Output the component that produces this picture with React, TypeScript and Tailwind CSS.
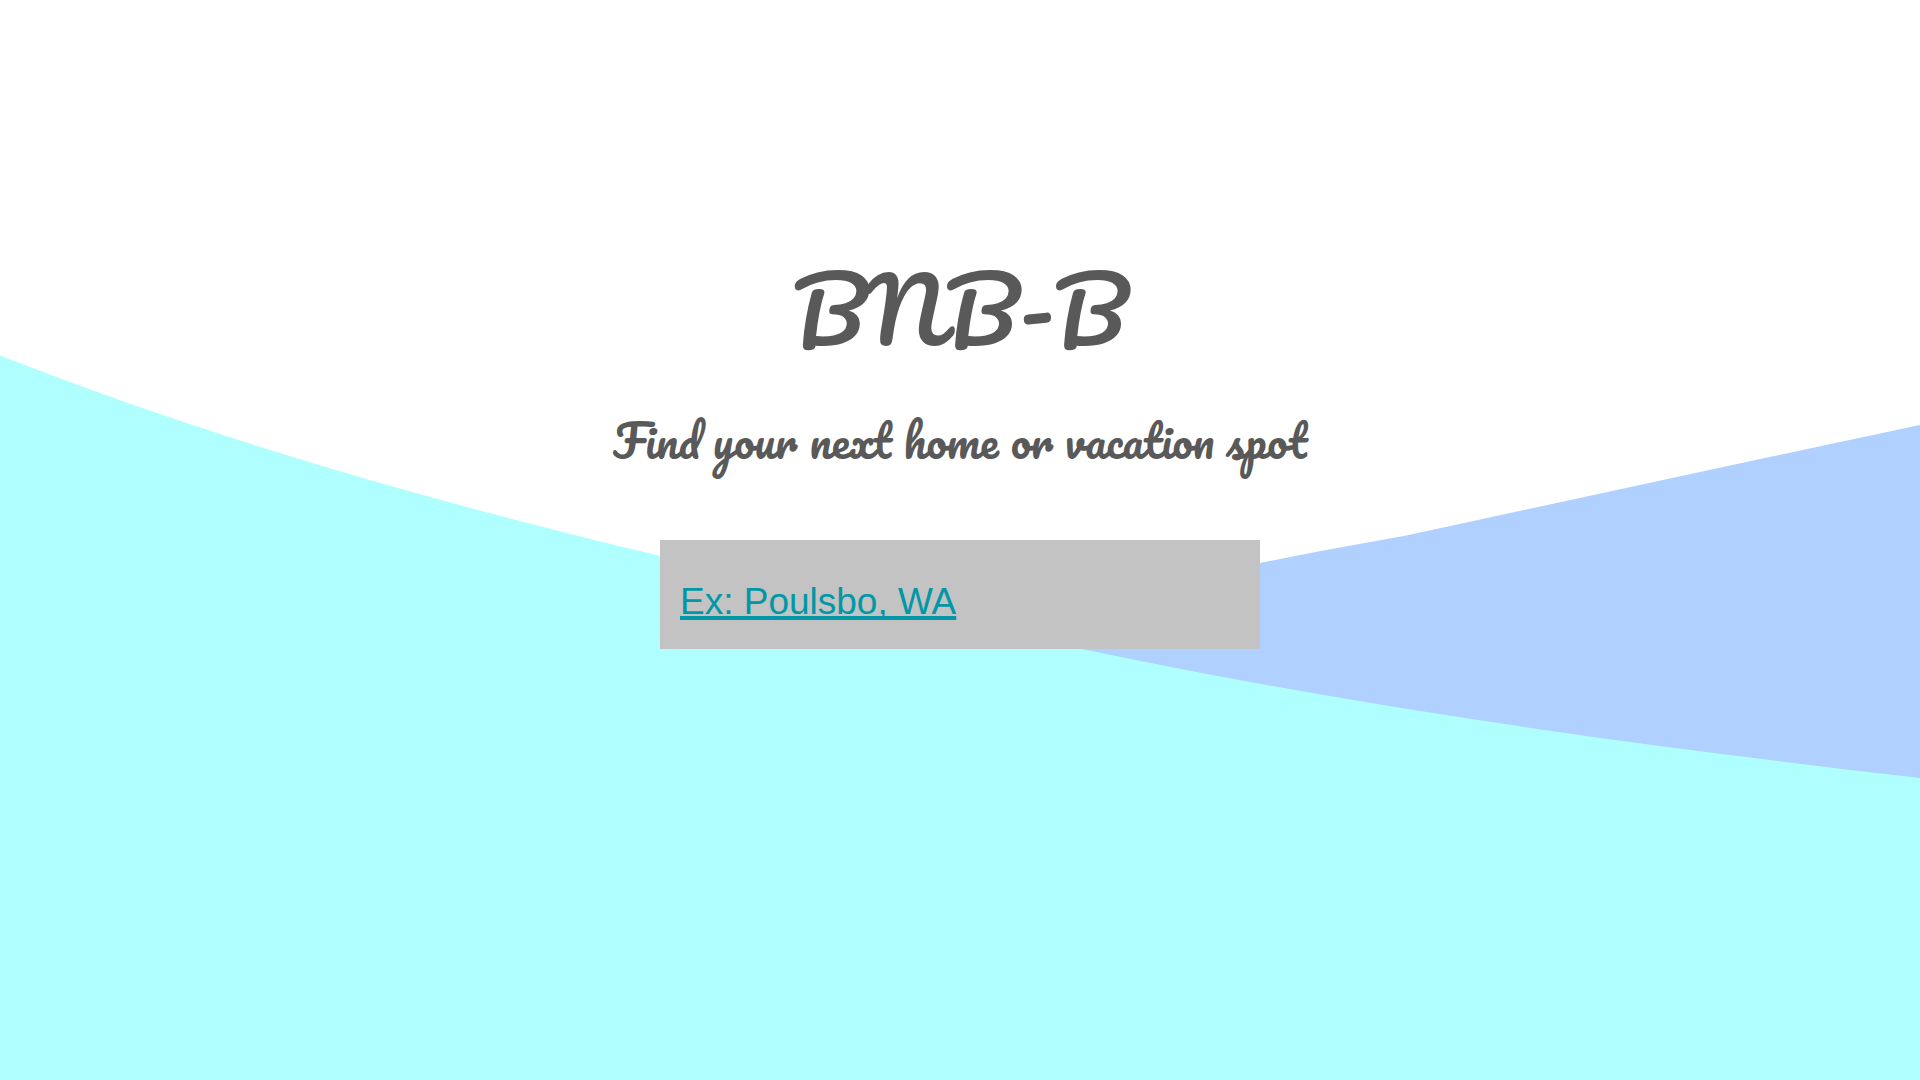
function Waves() {
  return (
    <svg
      aria-hidden="true"
      className="absolute inset-0 h-full w-full"
      viewBox="0 0 1920 1080"
      preserveAspectRatio="none"
    >
      <path
        fill="#b0d0ff"
        d="M960 610L1260 563L1318 551.5L1405 535.7L1478 520L1730 465.5L1920 425V800H960Z"
      />
      <path
        fill="#b0ffff"
        d="M0 355.5C219 441 438 503 657 555C799 591 942 620 1082 649C1363 708 1641 746 1920 778V1080H0Z"
      />
    </svg>
  );
}

export default function App() {
  return (
    <main className="relative min-h-screen overflow-hidden bg-white font-['Pacifico',cursive] text-[#595959]">
      <Waves />
      <div className="relative flex flex-col items-center px-5 pt-60">
        <h1 className="text-[88px] leading-[138px] font-normal">BNB-B</h1>
        <p className="mt-8 text-center text-[45px] leading-[60px] font-normal">
          Find your next home or vacation spot
        </p>
        <div className="mt-[70px] w-full max-w-[600px] bg-[#c3c3c3] px-5 pt-10 pb-[25px] font-['Liberation_Sans',Arial,sans-serif] text-[37px] leading-[44px]">
          <a
            href="#search"
            className="text-[#0097a7] underline decoration-[4px] [text-decoration-skip-ink:none]"
          >
            Ex: Poulsbo, WA
          </a>
        </div>
      </div>
    </main>
  );
}
